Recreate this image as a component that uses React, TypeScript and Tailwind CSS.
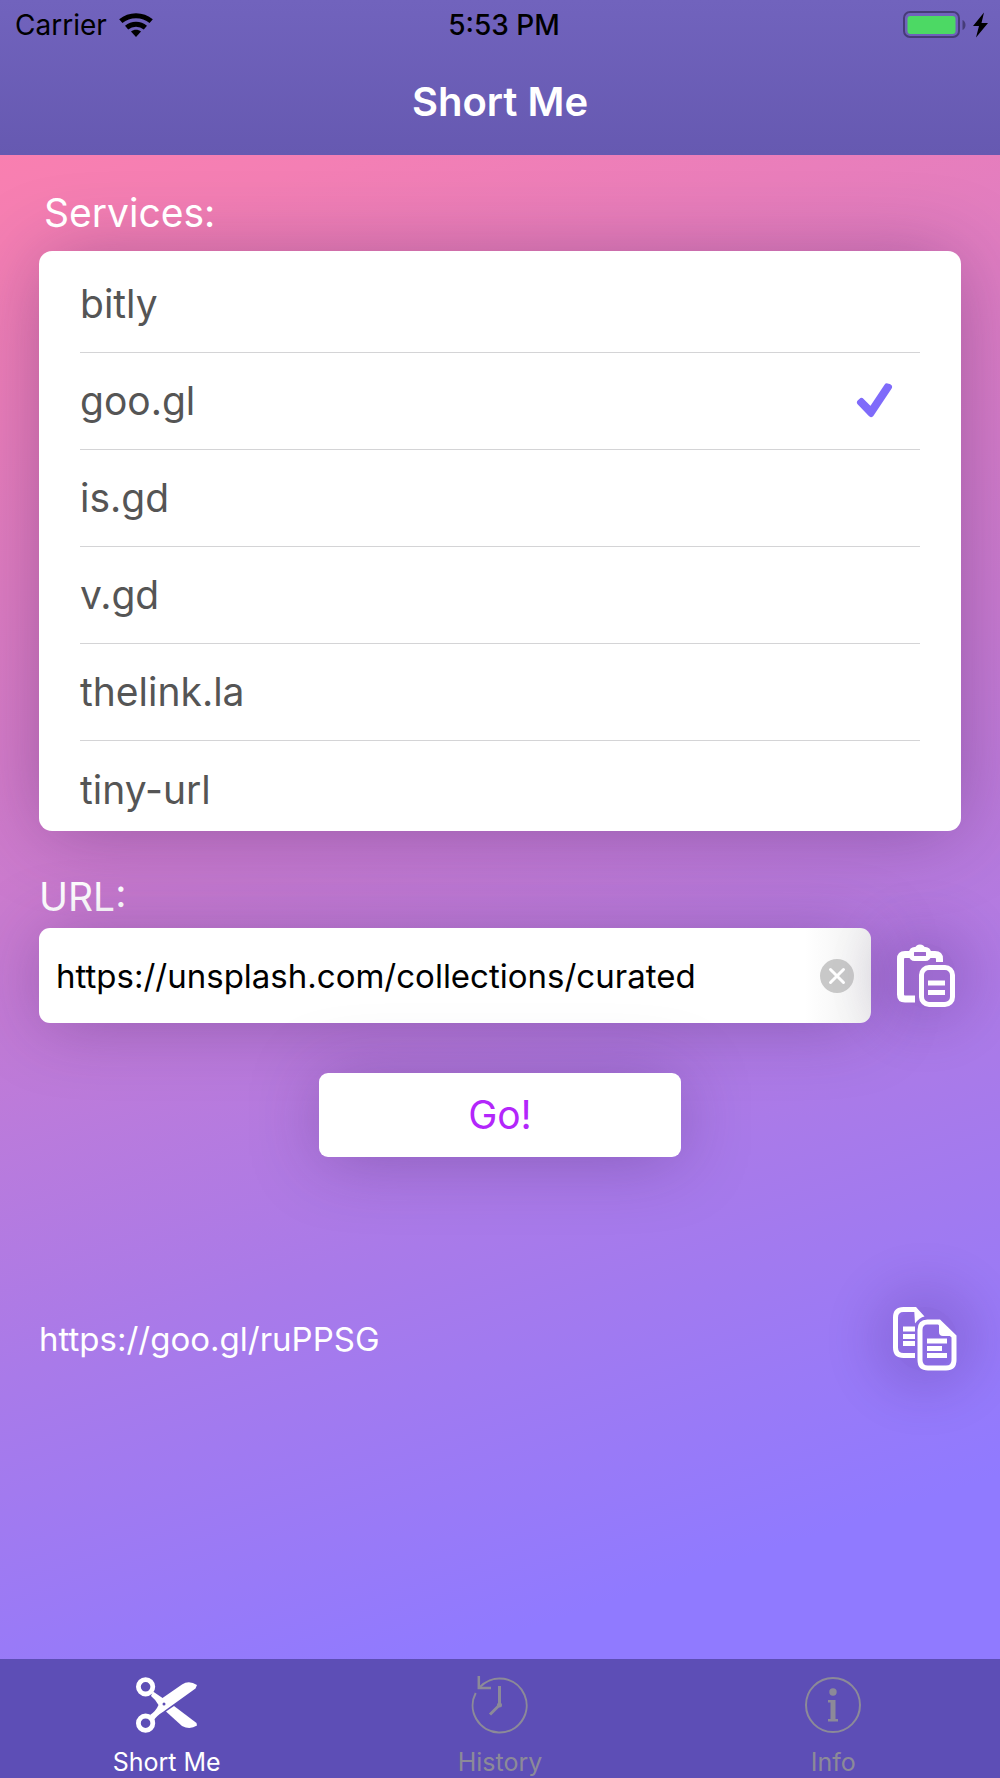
import { useState } from "react";

const SERVICES = ["bitly", "goo.gl", "is.gd", "v.gd", "thelink.la", "tiny-url"];

function WifiIcon() {
  return (
    <svg viewBox="0 0 34 24" className="h-6 w-[34px]" fill="none" stroke="currentColor" strokeWidth="5">
      <path d="M1.8 8.2C10.5.8 23.5.8 32.2 8.2" />
      <path d="M7.6 14.6c5.4-4.4 13.4-4.4 18.8 0" />
      <path d="M12 18.6c2.8-2.6 7.2-2.6 10 0L17 24z" fill="currentColor" stroke="none" />
    </svg>
  );
}

function BatteryIcon() {
  return (
    <svg viewBox="0 0 86 28" className="h-7 w-[86px]">
      <rect x="1" y="1" width="55" height="25" rx="6" fill="none" stroke="#463c78" strokeWidth="2" />
      <rect x="4.5" y="5" width="48" height="18" rx="3" fill="#4cd964" />
      <path d="M59.5 9c4 1.500 4 8.500 0 10z" fill="#463c78" />
      <path d="M81 1.500 70 15h6l-3 11.500L85 12h-6.500z" fill="#000" />
    </svg>
  );
}

function CheckIcon() {
  return (
    <svg
      viewBox="0 0 38 38"
      className="h-[38px] w-[38px]"
      fill="none"
      stroke="#7f6bfa"
      strokeWidth="6"
      strokeLinejoin="round"
      strokeLinecap="round"
    >
      <path d="M4 20.500 15 32 33 5" />
      <path d="M5.500 19 15 28.500 31 4.500" />
    </svg>
  );
}

function PasteIcon() {
  return (
    <svg viewBox="0 0 58 64" className="h-16 w-[58px]" fill="none" stroke="currentColor">
      <path d="M18 55H8q-4.500 0-4.500-4.500V15q0-4.500 4.500-4.500h5M33 10.500h5q4.500 0 4.500 4.500v3" strokeWidth="7" />
      <rect x="14.500" y="5.500" width="17" height="9" rx="3" strokeWidth="5" />
      <path d="M18 4q1-3.500 5-3.500T28 4z" fill="currentColor" stroke="none" />
      <rect x="24.500" y="23.500" width="31" height="37" rx="7.500" strokeWidth="5" />
      <path d="M31 39h17M31 48.500h17" strokeWidth="5" />
    </svg>
  );
}

function CopyIcon() {
  return (
    <svg viewBox="0 0 64 64" className="h-16 w-16" fill="none" stroke="currentColor">
      <path d="M22 48.500H10.500q-8 0-8-8v-30q0-8 8-8H22" strokeWidth="5" />
      <path d="M21 0h2l8.500 9.500q-5 1-9.500 7z" fill="currentColor" stroke="none" />
      <path d="M10 22h12M10 29.500h12M10 36.500h12" strokeWidth="5" />
      <path d="M34.500 15H46l15 14.500V53q0 8-8 8H35q-8 0-8-8V23q0-8 7.500-8z" strokeWidth="5" />
      <path d="M46 13.500V25q0 4 4 4h12z" fill="currentColor" stroke="none" />
      <path d="M34 34h20M34 41.500h15M34 48.500h20" strokeWidth="5" />
    </svg>
  );
}

function ScissorsIcon() {
  return (
    <svg viewBox="0 0 62 56" className="h-14 w-[62px]">
      <g fill="none" stroke="currentColor" strokeWidth="4.800">
        <circle cx="9.600" cy="9.800" r="7.200" />
        <circle cx="9.600" cy="46.200" r="7.200" />
      </g>
      <path
        fill="currentColor"
        fillRule="evenodd"
        d="M17 14.500 26.500 21 46 7.500q7-4.500 15 .5l-1.500 3.500-32 23Q21 38.500 18 43l-4-5q6-4 8.500-10-3-5.500-7.500-9zM28 25.500a1.500 1.500 0 1 0 0 3 1.500 1.500 0 1 0 0-3z"
      />
      <path fill="currentColor" d="M30 34.500 38 29l22.500 17 .5 2.500q-7 4.500-15 .5z" />
    </svg>
  );
}

function HistoryIcon() {
  return (
    <svg viewBox="0 0 58 58" className="h-[58px] w-[58px]" fill="none" stroke="currentColor" strokeWidth="2">
      <path d="M4.700 17A27 27 0 1 0 8.500 11.500" />
      <path d="M7.800 0v12H20" strokeWidth="2.500" />
      <path d="M28.500 10v19l-9.500 9.500" strokeWidth="3" />
      <circle cx="28.500" cy="29" r="2.500" fill="currentColor" stroke="none" />
    </svg>
  );
}

function InfoIcon() {
  return (
    <svg viewBox="0 0 58 58" className="h-[58px] w-[58px]" fill="currentColor">
      <circle cx="29" cy="29" r="27" fill="none" stroke="currentColor" strokeWidth="2" />
      <circle cx="29" cy="16" r="3.700" />
      <path d="M24 24h7.500v19H34v2.500H24V43h2.500V26.500H24z" />
    </svg>
  );
}

const TABS = [
  { label: "Short Me", icon: ScissorsIcon },
  { label: "History", icon: HistoryIcon },
  { label: "Info", icon: InfoIcon },
];

function Header() {
  return (
    <header className="h-[155px] bg-linear-to-b from-[#7163bd] to-[#6659b1]">
      <div className="grid h-[50px] grid-cols-3 items-center px-[15px] text-[28px] text-black">
        <div className="flex items-center gap-3">
          <span>Carrier</span>
          <WifiIcon />
        </div>
        <span className="pl-2 text-center font-medium">5:53 PM</span>
        <div className="-mr-1 flex justify-end">
          <BatteryIcon />
        </div>
      </div>
      <h1 className="pt-7 text-center text-[40px] leading-[48px] font-semibold text-white">Short Me</h1>
    </header>
  );
}

function ServiceList({ value, onChange }: { value: string; onChange: (name: string) => void }) {
  return (
    <fieldset>
      <legend className="pl-[5px] text-[39px] leading-[48px]">Services:</legend>
      <div className="mt-[14px] h-[580px] overflow-hidden rounded-[13px] bg-white px-[41px] pt-[5px] text-[#555] shadow-[0_4px_80px_-4px_rgba(60,30,90,0.38)]">
        {SERVICES.map((name) => (
          <label
            key={name}
            className="flex h-[97px] items-center justify-between border-b border-[#d4d4d6] pr-[26px] text-[39px] leading-[48px] last:border-b-0"
          >
            <input
              type="radio"
              name="service"
              className="sr-only"
              checked={name === value}
              onChange={() => onChange(name)}
            />
            <span>{name}</span>
            {name === value && <CheckIcon />}
          </label>
        ))}
      </div>
    </fieldset>
  );
}

export default function App() {
  const [service, setService] = useState("goo.gl");
  const [url, setUrl] = useState("https://unsplash.com/collections/curated");

  return (
    <div className="flex min-h-screen flex-col bg-[#907aff] font-['Inter',sans-serif] text-white">
      <Header />
      <main className="flex-1 bg-linear-[162deg,#f97fb0_0%,#f47fb4_6%,#c97bd0_42%,#a97ae9_67%,#907aff_90%] px-[39px] pt-[34px]">
        <ServiceList value={service} onChange={setService} />

        <label htmlFor="url" className="mt-[42px] block text-[39px] leading-[48px]">
          URL:
        </label>
        <div className="mt-[7px] flex items-center gap-[26px]">
          <div className="flex h-[95px] flex-1 items-center rounded-[11px] bg-linear-to-r from-white from-92% to-[#f0f0f0] px-[17px] shadow-[0_4px_70px_-4px_rgba(60,30,90,0.34)]">
            <input
              id="url"
              type="url"
              value={url}
              onChange={(e) => setUrl(e.target.value)}
              className="min-w-0 flex-1 bg-transparent text-[33px] leading-[40px] text-black outline-none"
            />
            <button type="button" aria-label="Clear" onClick={() => setUrl("")}>
              <svg viewBox="0 0 34 34" className="h-[34px] w-[34px]">
                <circle cx="17" cy="17" r="17" fill="#c8c8c8" />
                <path d="m10.500 10.500 13 13m0-13-13 13" stroke="#fff" strokeWidth="3" strokeLinecap="round" />
              </svg>
            </button>
          </div>
          <button
            type="button"
            aria-label="Paste"
            className="mr-[6px] rounded-full bg-[#3c1e6e]/15 shadow-[0_0_50px_20px_rgba(60,30,110,0.18)]"
          >
            <PasteIcon />
          </button>
        </div>

        <div className="mt-[50px] flex justify-center">
          <button
            type="button"
            className="h-[84px] w-[362px] rounded-[9px] bg-white text-[39px] text-[#b326fb] shadow-[0_4px_70px_-4px_rgba(60,30,90,0.34)]"
          >
            Go!
          </button>
        </div>

        <div className="mt-[150px] flex items-center justify-between">
          <a href="#result" className="text-[33px] leading-[40px]">
            https://goo.gl/ruPPSG
          </a>
          <button
            type="button"
            aria-label="Copy"
            className="mr-1 rounded-full bg-[#3c1e6e]/15 shadow-[0_0_50px_20px_rgba(60,30,110,0.18)]"
          >
            <CopyIcon />
          </button>
        </div>
      </main>

      <nav className="grid h-[119px] grid-cols-3 bg-[#5d4eb6]">
        {TABS.map(({ label, icon: Icon }, i) => (
          <button
            key={label}
            type="button"
            className={`flex flex-col items-center pt-[17px] ${i === 0 ? "text-white" : "text-[#8c8a98]"}`}
          >
            <span className="flex h-[58px] items-center">
              <Icon />
            </span>
            <span className="mt-3 text-[25px] leading-[32px]">{label}</span>
          </button>
        ))}
      </nav>
    </div>
  );
}
